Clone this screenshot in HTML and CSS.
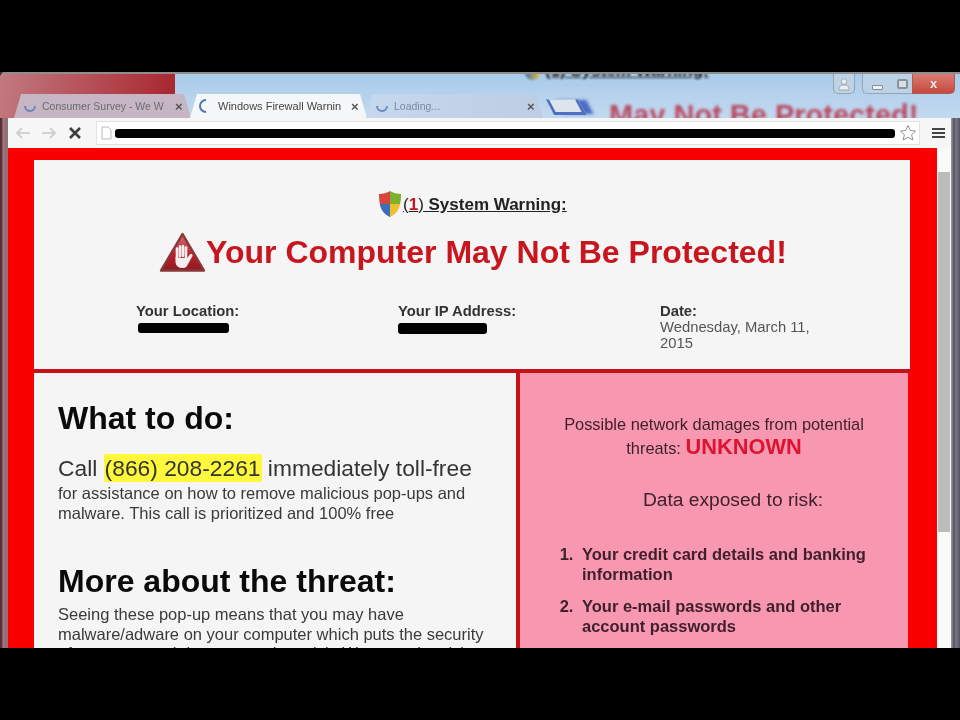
FILE: index.html
```html
<!DOCTYPE html>
<html lang="en">
<head>
    <meta charset="UTF-8">
    <title>Windows Firewall Warning</title>
    <link rel="stylesheet" href="styles.css">
</head>
<body>
    <div class="shot">
        <div class="titlebar">
            <div class="behind-red"></div>
            <div class="ghost-shield"></div>
            <div class="ghost-small">(1) System Warning:</div>
            <div class="ghost-big">May Not Be Protected!</div>
            <div class="win-buttons">
                <div class="win-btn user">
                    <svg width="14" height="14" viewBox="0 0 14 14"><circle cx="7" cy="4.500" r="2.800" fill="#eceff2" stroke="#a4a9ae"/><path d="M2 13c0-4 2-5 5-5s5 1 5 5z" fill="#eceff2" stroke="#a4a9ae"/></svg>
                </div>
                <div class="win-btn min"><span class="min-bar"></span></div>
                <div class="win-btn max"><span class="max-box"></span></div>
                <div class="win-btn close">x</div>
            </div>
            <div class="tabs">
                <div class="tab tab-back">
                    <svg class="spin" width="14" height="14" viewBox="0 0 14 14"><path d="M2 7a5 5 0 0 0 10 0" fill="none" stroke="#6d80b8" stroke-width="2"/></svg>
                    <span class="tab-title">Consumer Survey - We W</span>
                    <span class="tab-x">×</span>
                </div>
                <div class="tab tab-active">
                    <svg class="spin" width="14" height="14" viewBox="0 0 14 14"><path d="M8 1a6 6 0 0 0 0 12" fill="none" stroke="#4a78b0" stroke-width="2"/></svg>
                    <span class="tab-title">Windows Firewall Warnin</span>
                    <span class="tab-x">×</span>
                </div>
                <div class="tab tab-load">
                    <svg class="spin" width="14" height="14" viewBox="0 0 14 14"><path d="M2 7a5 5 0 0 0 10 0" fill="none" stroke="#6d88c0" stroke-width="2"/></svg>
                    <span class="tab-title">Loading...</span>
                    <span class="tab-x">×</span>
                </div>
                <div class="new-tab"></div>
            </div>
        </div>

        <div class="toolbar">
            <svg class="nav" width="18" height="14" viewBox="0 0 18 14"><path d="M16 7H3M8 2L3 7l5 5" fill="none" stroke="#cdd1d3" stroke-width="2"/></svg>
            <svg class="nav" width="18" height="14" viewBox="0 0 18 14"><path d="M2 7h13M10 2l5 5-5 5" fill="none" stroke="#cdd1d3" stroke-width="2"/></svg>
            <svg class="nav stop" width="14" height="14" viewBox="0 0 14 14"><path d="M2 2l10 10M12 2L2 12" fill="none" stroke="#3d3d3d" stroke-width="2.600"/></svg>
            <div class="omnibox">
                <svg width="11" height="14" viewBox="0 0 11 14"><path d="M1 1h6l3 3v9H1z" fill="#fff" stroke="#b5b9bd"/></svg>
                <div class="redact url-redact"></div>
                <svg class="star" width="18" height="18" viewBox="0 0 18 18"><path d="M9 1.500l2.300 5 5.300.6-4 3.600 1.200 5.300L9 13.300 4.200 16l1.200-5.300-4-3.600 5.300-.6z" fill="#fff" stroke="#8d9195"/></svg>
            </div>
            <div class="menu"><span></span><span></span><span></span></div>
        </div>

        <div class="viewport">
            <div class="page">
                <div class="head-panel">
                    <div class="sys-warning">
                        <svg width="24" height="28" viewBox="0 0 24 28">
                            <path d="M12 1C9 3 5 4 1 4c0 9 1 18 11 23z" fill="#d8463a"/>
                            <path d="M12 1c3 2 7 3 11 3 0 4 0 6-1 10H12z" fill="#7fb02c"/>
                            <path d="M12 14H2c1 6 4 10 10 13z" fill="#3a6fc0"/>
                            <path d="M12 14h10c-1 6-4 10-10 13z" fill="#eec02e"/>
                        </svg>
                        <span class="sys-text"><span class="count-open">(</span><span class="count">1</span><span class="count-open">)</span> System Warning:</span>
                    </div>
                    <h1 class="main-title">
                        <svg width="47" height="41" viewBox="0 0 47 41">
                            <defs>
                                <linearGradient id="stopFill" x1="0" y1="0" x2="0" y2="1">
                                    <stop offset="0" stop-color="#d96a6c"/>
                                    <stop offset="0.6" stop-color="#b8202a"/>
                                    <stop offset="1" stop-color="#8e1a20"/>
                                </linearGradient>
                            </defs>
                            <path d="M23.500 2L45 38.500H2z" fill="url(#stopFill)" stroke="#86383c" stroke-width="2.400" stroke-linejoin="round"/>
                            <path d="M18 16.500v10M21 14.500v10M24 14v10M27 15.500v10" stroke="#f6eeee" stroke-width="2.600" stroke-linecap="round"/>
                            <path d="M16.500 24v6c0 3 3 6 6 6h2c2 0 3-1 4-3l5-9c.5-1.500-1.500-2.500-2.500-1.500l-3 3.500H17z" fill="#f6eeee"/>
                        </svg>
                        <span>Your Computer May Not Be Protected!</span>
                    </h1>
                    <div class="info-row">
                        <div class="info-col">
                            <div class="info-label">Your Location:</div>
                            <div class="redact loc-redact"></div>
                        </div>
                        <div class="info-col">
                            <div class="info-label">Your IP Address:</div>
                            <div class="redact ip-redact"></div>
                        </div>
                        <div class="info-col date-col">
                            <div class="info-label">Date:</div>
                            <div class="info-value">Wednesday, March 11, 2015</div>
                        </div>
                    </div>
                </div>
                <div class="columns">
                    <div class="col-left">
                        <h2>What to do:</h2>
                        <p class="call">Call <mark>(866) 208-2261</mark> immediately toll-free</p>
                        <p class="small">for assistance on how to remove malicious pop-ups and malware. This call is prioritized and 100% free</p>
                        <h2 class="more">More about the threat:</h2>
                        <p class="small">Seeing these pop-up means that you may have malware/adware on your computer which puts the security of your personal data at a serious risk. We strongly advise</p>
                    </div>
                    <div class="col-right">
                        <p class="damages">Possible network damages from potential threats: <strong>UNKNOWN</strong></p>
                        <p class="exposed">Data exposed to risk:</p>
                        <ol class="risks">
                            <li>Your credit card details and banking information</li>
                            <li>Your e-mail passwords and other account passwords</li>
                            <li>Your Facebook, Skype, AIM, ICQ and other chat logs</li>
                        </ol>
                    </div>
                </div>
            </div>
            <div class="scrollbar"><div class="thumb"></div></div>
        </div>
    </div>
</body>
</html>
```

FILE: styles.css
```css
* {
    box-sizing: border-box;
}
html, body {
    margin: 0;
    height: 720px;
    background: #000;
    overflow: hidden;
}
body {
    font-family: "Liberation Sans", Arial, sans-serif;
    padding-top: 72px;
}
.shot {
    height: 576px;
    overflow: hidden;
    display: flex;
    flex-direction: column;
    filter: blur(0.35px);
    background:
        linear-gradient(90deg, #4a2a30 0, #6a3a40 2px, #a8787c 3px, #8a6a70 7px, transparent 8px),
        linear-gradient(270deg, #55535f 0, #7a7884 4px, #55535f 6px, #a0a0a8 9px, transparent 9px);
    background-color: #8a8a90;
}

/* window title bar and tabs */
.titlebar {
    position: relative;
    height: 46px;
    flex: none;
    background: linear-gradient(#a9cbea, #c3d9ef);
    border-top: 2px solid #8f8f8f;
    border-radius: 6px 0 0 0;
    overflow: hidden;
}
.behind-red {
    position: absolute;
    left: 0;
    top: 0;
    width: 175px;
    height: 44px;
    background: linear-gradient(100deg, #c27a80, #a8242e);
}
.ghost-shield {
    position: absolute;
    left: 525px;
    top: -8px;
    width: 15px;
    height: 14px;
    border-radius: 0 0 8px 8px;
    background: linear-gradient(90deg, #3a6fc0, #eec02e);
    filter: blur(1px);
}
.ghost-small {
    position: absolute;
    left: 545px;
    top: -13px;
    font-size: 17px;
    font-weight: bold;
    color: #222;
    text-decoration: underline;
    white-space: nowrap;
    filter: blur(0.8px);
}
.ghost-big {
    position: absolute;
    left: 609px;
    top: 25px;
    font-size: 29px;
    font-weight: bold;
    color: #b84a62;
    white-space: nowrap;
    filter: blur(1.400px);
}
.win-buttons {
    position: absolute;
    right: 5px;
    top: 0;
    display: flex;
}
.win-btn {
    height: 20px;
    display: flex;
    align-items: center;
    justify-content: center;
    background: #bcd2e6;
    border: 1px solid #98a4b0;
    border-top: none;
}
.win-btn.user {
    width: 22px;
    margin-right: 7px;
    border-radius: 0 0 5px 5px;
}
.win-btn.min {
    width: 30px;
    border-right: none;
    border-radius: 0 0 0 5px;
    align-items: flex-end;
    padding-bottom: 3px;
}
.win-btn.max {
    width: 20px;
    border-left: none;
    border-right: none;
}
.win-btn.close {
    width: 43px;
    background: linear-gradient(#dc7c72, #c4483e);
    color: #f4e8e8;
    font-weight: bold;
    font-size: 13px;
    border-color: #b05a58;
    border-radius: 0 0 5px 0;
}
.min-bar {
    width: 11px;
    height: 5px;
    background: #eef0f2;
    border: 1px solid #868c92;
    border-radius: 1px;
}
.max-box {
    width: 11px;
    height: 10px;
    background: #d4e0ea;
    border: 2px solid #8a9298;
    border-radius: 2px;
}
.tabs {
    position: absolute;
    left: 14px;
    bottom: 0;
    display: flex;
    align-items: flex-end;
}
.tab {
    height: 24px;
    width: 177px;
    padding: 0 2px 0 9px;
    margin-right: -1px;
    display: flex;
    align-items: center;
    gap: 5px;
    font-size: 10.500px;
    color: #6b6b70;
    clip-path: polygon(0 100%, 7px 0, calc(100% - 7px) 0, 100% 100%);
    white-space: nowrap;
}
.tab-back {
    background: #c6b6c4;
}
.tab-active {
    background: #f6f7f8;
    color: #444;
    font-size: 11px;
    padding-left: 8px;
    gap: 6px;
}
.tab-load {
    background: linear-gradient(90deg, #c6d8ee, #bccde4);
    color: #7c8aa0;
}
.tab-title {
    flex: 1;
    overflow: hidden;
}
.tab-x {
    color: #555;
    font-size: 13px;
    font-weight: bold;
    width: 14px;
}
.new-tab {
    width: 32px;
    height: 16px;
    margin: 0 0 3px 8px;
    background: #dce4ec;
    border: 3px solid #4f70c0;
    border-top-width: 1px;
    border-top-color: #b8cce4;
    transform: skewX(28deg);
    box-shadow: 9px 0 3px -1px #4a6cc4;
}

/* toolbar */
.toolbar {
    height: 30px;
    flex: none;
    margin-left: 8px;
    margin-right: 9px;
    padding: 0 6px 0 6px;
    display: flex;
    align-items: center;
    gap: 8px;
    background: #f6f6f6;
}
.nav.stop {
    margin-left: 2px;
}
.omnibox {
    flex: 1;
    height: 24px;
    margin-left: 6px;
    padding: 0 2px 0 4px;
    display: flex;
    align-items: center;
    gap: 3px;
    background: #fff;
    border: 1px solid #e2e2e2;
}
.redact {
    background: #000;
    border-radius: 3px;
}
.url-redact {
    flex: 1;
    height: 9px;
    margin-right: 1px;
}
.menu {
    width: 13px;
    margin-left: 4px;
    display: flex;
    flex-direction: column;
    gap: 2px;
}
.menu span {
    height: 2px;
    background: #444;
}

/* page */
.viewport {
    flex: 1;
    min-height: 0;
    margin-left: 8px;
    margin-right: 9px;
    display: flex;
}
.page {
    flex: 1;
    min-width: 0;
    padding: 12px 27px 0 26px;
    background: #fb0000;
    overflow: hidden;
}
.scrollbar {
    width: 14px;
    flex: none;
    background: #fafafa;
}
.thumb {
    height: 360px;
    margin: 24px 1px 0;
    background: #bcbcbc;
}
.head-panel {
    height: 209px;
    padding-top: 28px;
    background: #f5f5f6;
}
.sys-warning {
    height: 32px;
    padding-left: 344px;
    display: flex;
    align-items: center;
    gap: 1px;
}
.sys-text {
    font-size: 17px;
    font-weight: bold;
    color: #222;
    text-decoration: underline;
    position: relative;
    top: 1px;
}
.count-open {
    font-weight: normal;
}
.count {
    color: #c8141e;
}
.main-title {
    margin: 10px 0 0 125px;
    display: flex;
    align-items: center;
    height: 44px;
    font-size: 32px;
    color: #c8161f;
    white-space: nowrap;
}
.info-row {
    margin: 29px 0 0 102px;
    display: flex;
}
.info-col {
    width: 262px;
    font-size: 14.800px;
    line-height: 16px;
}
.info-label {
    font-weight: bold;
    color: #333;
}
.info-value {
    color: #555;
}
.date-col {
    width: 170px;
}
.loc-redact {
    width: 91px;
    height: 10px;
    margin: 4px 0 0 2px;
}
.ip-redact {
    width: 89px;
    height: 11px;
    margin-top: 4px;
}
.columns {
    display: flex;
    height: 400px;
    border-top: 4px solid #c5121a;
}
.col-left {
    width: 482px;
    flex: none;
    padding: 27px 25px 0 24px;
    background: #f5f5f6;
}
.col-left h2 {
    margin: 0;
    font-size: 32px;
    line-height: 36px;
    color: #0a0a0a;
}
.col-left h2.more {
    margin-top: 40px;
}
.call {
    margin: 19px 0 0;
    font-size: 22.800px;
    line-height: 26px;
    color: #333;
    white-space: nowrap;
}
mark {
    background: #fdf83c;
    color: #333;
    padding: 1px 1px;
}
.small {
    margin: 2px 0 0;
    font-size: 16.500px;
    line-height: 20px;
    color: #3a3a3a;
}
.more + .small {
    margin-top: 6px;
    line-height: 19.500px;
}
.col-right {
    width: 392px;
    flex: none;
    padding: 39px 36px 0 36px;
    background: #f898b0;
    border-left: 4px solid #c5121a;
    color: #40202c;
}
.damages {
    margin: 0;
    font-size: 16.400px;
    line-height: 24px;
    text-align: center;
}
.damages strong {
    font-size: 21.800px;
    line-height: 0;
    color: #dc1430;
}
.exposed {
    margin: 28px 0 0;
    padding-left: 38px;
    font-size: 19.200px;
    line-height: 24px;
    text-align: center;
}
.risks {
    margin: 33px 0 0;
    padding-left: 22px;
    font-size: 16.500px;
    line-height: 19.500px;
    font-weight: bold;
}
.risks li {
    margin-bottom: 13px;
    padding-left: 4px;
}
```
